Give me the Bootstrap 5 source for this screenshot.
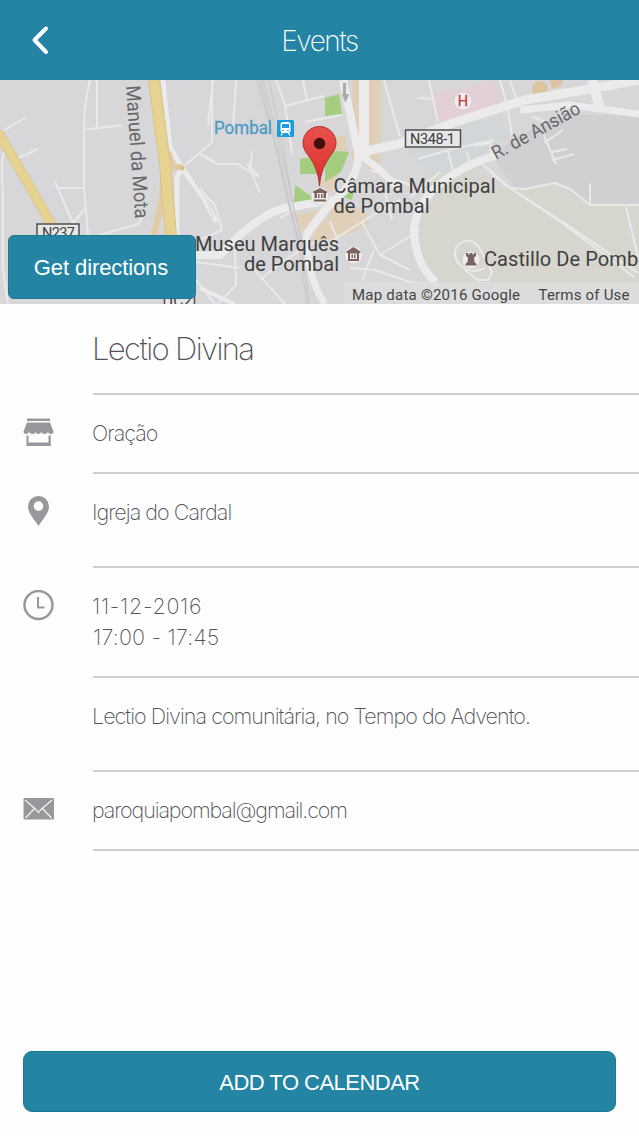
<!DOCTYPE html>
<html lang="pt">

<head>
    <meta charset="UTF-8">
    <meta name="viewport" content="width=device-width, initial-scale=1.0">
    <title>Events</title>
    <link href="https://cdn.jsdelivr.net/npm/bootstrap@5.3.0/dist/css/bootstrap.min.css" rel="stylesheet">
    <style>
        body {
            font-family: Inter, "Liberation Sans", sans-serif;
            font-weight: 200;
            color: #545358;
            background-color: #fefefe;
        }

        .top-bar {
            height: 80px;
            background-color: #2384a4;
            color: #ffffff;
            padding: 3px 23px 0;
        }

        .side-slot {
            width: 34px;
        }

        .top-title {
            font-size: 28px;
            font-weight: 200;
            letter-spacing: -1.45px;
        }

        .map-area {
            height: 224px;
        }

        .map-area text {
            font-family: Roboto, sans-serif;
            font-weight: 400;
        }

        .btn-teal {
            --bs-btn-color: #ffffff;
            --bs-btn-bg: #2384a4;
            --bs-btn-border-color: #1c7893;
            --bs-btn-hover-color: #ffffff;
            --bs-btn-hover-bg: #1c7893;
            font-family: "Liberation Sans", sans-serif;
            font-size: 22px;
            line-height: 1;
        }

        .btn-directions {
            left: 8px;
            bottom: 5px;
            width: 188px;
            height: 64px;
            padding: 8px 12px 6px 10px;
            letter-spacing: -0.1px;
        }

        .btn-calendar {
            height: 61px;
            border-radius: 9px;
            padding-top: 8px;
            letter-spacing: -0.52px;
        }

        .icon-col {
            width: 93px;
            padding: 22px 0 0 23px;
        }

        .detail-body {
            border-bottom: 2px solid #cfcfd1;
            padding-top: 23px;
            font-size: 21.5px;
            line-height: 31px;
            letter-spacing: -0.96px;
            text-indent: -1px;
        }

        .row-title { height: 91px; }
        .row-short { height: 79px; }
        .row-mid { height: 94px; }
        .row-tall { height: 110px; }

        .row-title .detail-body {
            padding-top: 25px;
            font-size: 31px;
            line-height: 40px;
            letter-spacing: -1.62px;
        }

        .date-text {
            letter-spacing: 0.7px;
        }

        .time-text {
            letter-spacing: 0.2px;
        }

        .mail-text {
            letter-spacing: -1.12px;
        }

        .bottom-bar {
            padding: 0 23px 24px;
        }
    </style>
</head>

<body>
    <div class="d-flex flex-column vh-100 overflow-hidden">
        <!-- Header -->
        <header class="top-bar d-flex align-items-center justify-content-between flex-shrink-0">
            <a href="#" class="side-slot d-flex" aria-label="Back">
                <svg width="34" height="34" viewBox="0 0 34 34" fill="none" stroke="#fff" stroke-width="4" stroke-linecap="round" stroke-linejoin="round">
                    <path d="M23 3.500L11.500 15L23 27" />
                </svg>
            </a>
            <h1 class="top-title m-0">Events</h1>
            <span class="side-slot"></span>
        </header>

        <!-- Map -->
        <section class="map-area position-relative flex-shrink-0">
            <svg class="d-block" width="639" height="224" viewBox="0 0 639 224">
                <rect width="639" height="224" fill="#d7d6d8" />
                <!-- areas -->
                <path d="M436 85Q425 98 430 118Q416 138 417 160Q420 190 442 208L639 208V125H590L555 103L520 110L490 98L474 86Z" fill="#d6d6cf" />
                <path d="M492 76L520 55L560 34L639 36V125H590L555 103L516 109Z" fill="#d0cfd2" />
                <path d="M433 14L482 3L495 0L501 22L480 34L438 42Z" fill="#e3d0d6" />
                <path d="M410 55L500 38L508 55L485 72L435 96L410 75Z" fill="#d1d6d8" />
                <path d="M352 0H381V70L378 98L362 80H352ZM336 57L346 55L348 72L335 70ZM322 100L338 94L330 112L320 110ZM294 135L318 130L310 152L306 160ZM338 123L366 132L368 145L340 158L308 163L318 148Z" fill="#e1d0b9" />
                <path d="M325 18L339 14L342 34L325 36ZM300 79L320 76L322 94L300 94ZM325 70L349 72L341 92L325 102ZM295 105L312 117L310 124L294 124ZM343 117L354 110L352 120Z" fill="#a5cd7f" />
                <circle cx="540" cy="9" r="8" fill="#dbc59d" />
                <path d="M550 0H563L561 6L552 9Z" fill="#e0c3a4" />
                <!-- minor roads -->
                <g fill="none" stroke="#e9e9ea" stroke-width="2" stroke-linejoin="round">
                    <path d="M90 0Q84 25 84 50L84 108L88 155M97 0V48M84 50L122 45M3 51L26 37M18 78L38 69M55 102L73 143L84 130M58 108H84M100 155L138 144L142 138" />
                    <path d="M5 68Q0 85 3 110V190L8 224M212 0V62L182 88M200 74L215 82" />
                    <path d="M200 74L216 84L238 84L250 92L252 71M250 92L258 96L248 84L260 113M213 0L208 45M236 0L233 48M276 0L285 25L292 74M285 26L324 16M303 0L307 20M305 42L342 35M200 110L215 125L222 150L200 160" />
                    <path d="M196 182L240 188M235 170L236 205L218 224M196 200L215 224M250 185L285 224M260 200L285 180L315 162M280 138L306 124" />
                    <path d="M384 0L400 57M330 162L378 132L400 120M330 142L338 160M362 142L380 175L420 150M374 170L362 200M350 188L375 190L410 202L440 205M380 175L410 190M385 112L392 140M370 90L410 105" />
                    <path d="M429 0L438 42M417 18L431 19M500 0L507 25L512 55M418 79L448 70L494 60M448 71L454 95M467 72L471 85L484 78M475 66L490 63L492 75M544 55L556 84M544 63L563 50M552 72Q562 70 567 69M552 80L574 74M532 36L545 42M510 0L518 25M590 103V125M626 127L638 177M440 92L410 118" />
                    <path d="M480 82L505 105L560 140L638 193M487 88L510 108L565 145L634 197M510 108L525 109L555 103L570 109L590 125H639" />
                    <path d="M485 188Q472 196 458 183Q452 172 458 165Q470 156 478 166Q485 178 492 192L488 200L478 200L465 190" />
                </g>
                <!-- wide roads -->
                <g fill="none" stroke="#ebebeb">
                    <path d="M343 0L358 72Q360 90 345 110L325 130L306 155" stroke-width="8" />
                    <path d="M364 0V78" stroke-width="10" />
                    <path d="M358 73L398 64L450 44L490 31L525 20L590 9L639 0" stroke-width="9" />
                    <path d="M358 73L380 90L398 108" stroke-width="7" />
                    <path d="M520 30L570 25L639 34" stroke-width="7" />
                    <path d="M592 0L600 28" stroke-width="10" />
                    <path d="M498 75Q460 85 433 110Q415 130 414 150Q415 185 436 202" stroke-width="8" />
                    <path d="M333 120L290 127Q268 130 240 155L220 175H196" stroke-width="8" />
                    <path d="M306 155L309 185Q315 210 325 224" stroke-width="7" />
                    <path d="M163 0L170 67L182 88L205 120L216 142M177 155V97L182 88" stroke-width="5" />
                    <path d="M200 108L216 140" stroke-width="3" />
                    <path d="M166 0L173 66L207 121L214 139" stroke="#d5d4d8" stroke-width="1" />
                    <path d="M200 208L234 224" stroke-width="4" />
                </g>
                <!-- railway -->
                <g fill="none" stroke="#c6c6c8" stroke-width="1">
                    <path d="M260 0L278 72L288 118L300 170" stroke="#cfcfd1" stroke-width="3" />
                    <path d="M257 0L276 68L286 112L298 160L307 224M263 0L280 66L290 110L301 160L309 224M269 0L284 72L294 130L304 170" />
                </g>
                <!-- main roads -->
                <g fill="none">
                    <path d="M-2 52L52 145" stroke="#d9c790" stroke-width="10" />
                    <path d="M-2 52L52 145" stroke="#e6d391" stroke-width="8" />
                    <path d="M163 100Q163 125 153 156M168 72L173 87H182" stroke="#e2cba1" stroke-width="6" />
                    <path d="M154 0L165 84L171 156" stroke="#d8c389" stroke-width="12" />
                    <path d="M154 0L165 84L171 156" stroke="#e6d391" stroke-width="10" />
                    <circle cx="182" cy="88" r="2.500" fill="#dcc28e" />
                </g>
                <path d="M343 3H346V14H349L345.500 23L342 14H343Z" fill="#a9aaac" />
                <rect x="344" y="202" width="295" height="22" fill="#dddddd" opacity=".75" />
                <!-- road shields -->
                <g fill="#e6e6e6" stroke="#505052" stroke-width="1.500">
                    <rect x="37" y="144" width="42" height="18" />
                    <rect x="405.500" y="50" width="55" height="17" />
                    <rect x="164.500" y="206" width="30" height="20" />
                </g>
                <g font-size="14.500" fill="#3d3d3f">
                    <text x="42" y="158" textLength="33">N237</text>
                    <text x="410" y="64" textLength="45">N348-1</text>
                    <text x="169" y="226" textLength="23" lengthAdjust="spacingAndGlyphs">IC2</text>
                </g>
                <!-- road names -->
                <g fill="#68686a">
                    <text transform="translate(126 6) rotate(86)" font-size="20" textLength="133" lengthAdjust="spacingAndGlyphs">Manuel da Mota</text>
                    <text transform="translate(496 80) rotate(-29)" font-size="19" textLength="98" lengthAdjust="spacingAndGlyphs">R. de Ansião</text>
                </g>
                <!-- station -->
                <text x="214" y="54" font-size="18" fill="#4a9bc6" stroke="#4a9bc6" stroke-width=".3" textLength="58" lengthAdjust="spacingAndGlyphs">Pombal</text>
                <rect x="277" y="40" width="17" height="17" rx="1.500" fill="#199ddb" />
                <rect x="280.500" y="42" width="10" height="11" rx="2.500" fill="#fff" />
                <path d="M282 44H289V48H282Z" fill="#199ddb" />
                <path d="M283 52.500L281 55.500M288 52.500L290 55.500" stroke="#fff" stroke-width="1.200" />
                <circle cx="283" cy="50.500" r=".8" fill="#199ddb" />
                <circle cx="288" cy="50.500" r=".8" fill="#199ddb" />
                <!-- poi badges -->
                <g fill="#f0eeec" stroke="#cccac8" stroke-width=".7">
                    <circle cx="463" cy="21" r="9" />
                    <circle cx="320" cy="116" r="9" />
                    <circle cx="353.500" cy="175" r="9" />
                    <circle cx="471" cy="180" r="9" />
                </g>
                <text x="457.800" y="26" font-size="14.500" fill="#c9403f" stroke="#c9403f" stroke-width=".3">H</text>
                <g fill="#7b6460">
                    <path d="M313 113V111.500L320 108L327 111.500V113ZM314 119.500H326V121.500H314ZM314.500 113H317V118H314.500ZM318 114H319.500V118H318ZM321 114H322.500V118H321ZM323.500 113H326V118H323.500Z" />
                    <path d="M346.500 171.500L353.500 167L360.500 171.500V173H359V181H348V173H346.500ZM350 173.500V179H357V173.500Z" fill-rule="evenodd" />
                    <path d="M351.500 174.500H353V178H351.500ZM354 174.500H355.500V178H354Z" />
                    <path d="M466 173H468V174.500H469.500V173H472.500V174.500H474V173H476V176L474 177.500L474.500 182L476.500 184V185.500H465.500V184L467.500 182L468 177.500L466 176Z" />
                </g>
                <!-- place names -->
                <g font-size="20" fill="#3f3f41">
                    <text x="333.500" y="113" textLength="162">Câmara Municipal</text>
                    <text x="333.500" y="133" textLength="96">de Pombal</text>
                    <text x="195" y="171" textLength="144">Museu Marquês</text>
                    <text x="244" y="191" textLength="95">de Pombal</text>
                    <text x="484" y="186" textLength="170">Castillo De Pombal</text>
                </g>
                <!-- marker -->
                <defs>
                    <linearGradient id="pinFill" x1="0" y1="0" x2="0" y2="1">
                        <stop offset="0" stop-color="#e9514d" />
                        <stop offset="1" stop-color="#d9302c" />
                    </linearGradient>
                </defs>
                <path d="M319.500 106C318.500 92 314 83 308 75C304.500 70.500 303 67 303 63A16.500 16.500 0 0 1 336 63C336 67 334.500 70.500 331 75C325 83 320.500 92 319.500 106Z" fill="url(#pinFill)" stroke="#a9332f" stroke-width="1" />
                <circle cx="319.500" cy="63.500" r="5.700" fill="#40100e" />
                <g font-size="15" fill="#444446">
                    <text x="352" y="219.500" textLength="168">Map data ©2016 Google</text>
                    <text x="538.500" y="219.500" textLength="91">Terms of Use</text>
                </g>
            </svg>
            <button type="button" class="btn btn-teal btn-directions position-absolute">Get directions</button>
        </section>

        <!-- Event details -->
        <main class="flex-grow-1">
            <div class="row-title d-flex">
                <div class="icon-col"></div>
                <div class="detail-body flex-grow-1">Lectio Divina</div>
            </div>
            <div class="row-short d-flex">
                <div class="icon-col">
                    <svg class="d-block" width="31" height="31" viewBox="0 0 31 31" fill="#97989b">
                        <path d="M4 1.500H27V4H4ZM4 5.500H27L30.500 14.500Q30.500 17 28 17Q25.500 17 25 15Q24 17 21.500 17Q19 17 18.500 15Q17.500 17 15.500 17Q13 17 12.500 15Q12 17 9.500 17Q7 17 6 15Q5.500 17 3 17Q0.500 17 .5 14.500Z" />
                        <path d="M3.500 18.500H5.500V25.500H25.500V18.500H27.800V29H3.500Z" />
                    </svg>
                </div>
                <div class="detail-body flex-grow-1">Oração</div>
            </div>
            <div class="row-mid d-flex">
                <div class="icon-col">
                    <svg class="d-block" width="31" height="31" viewBox="0 0 31 31">
                        <path d="M15.500 30C11 23 5 17 5 10.500A10.500 10.500 0 0 1 26 10.500C26 17 20 23 15.500 30ZM15.500 5.300A4.800 4.800 0 1 0 15.500 14.900A4.800 4.800 0 1 0 15.500 5.300Z" fill="#97989b" fill-rule="evenodd" />
                    </svg>
                </div>
                <div class="detail-body flex-grow-1">Igreja do Cardal</div>
            </div>
            <div class="row-tall d-flex">
                <div class="icon-col">
                    <svg class="d-block" width="31" height="31" viewBox="0 0 31 31" fill="none" stroke="#97989b">
                        <circle cx="15.500" cy="15" r="14" stroke-width="2.500" />
                        <path d="M15 7V17.500H21.500" stroke-width="2" />
                    </svg>
                </div>
                <div class="detail-body flex-grow-1"><span class="date-text">11-12-2016</span><br><span class="time-text">17:00 - 17:45</span></div>
            </div>
            <div class="row-mid d-flex">
                <div class="icon-col"></div>
                <div class="detail-body flex-grow-1">Lectio Divina comunitária, no Tempo do Advento.</div>
            </div>
            <div class="row-short d-flex">
                <div class="icon-col">
                    <svg class="d-block" width="31" height="31" viewBox="0 0 31 31">
                        <rect x=".5" y="4" width="30.500" height="21.500" rx="1" fill="#97989b" />
                        <path d="M2 6L13.500 16L15.500 18.500L17.500 16L29 6M2.500 24L11.500 14.500M28.500 24L19.500 14.500" fill="none" stroke="#f4f4f4" stroke-width="1.200" />
                    </svg>
                </div>
                <div class="detail-body mail-text flex-grow-1">paroquiapombal@gmail.com</div>
            </div>
        </main>

        <!-- Action -->
        <footer class="bottom-bar flex-shrink-0">
            <button type="button" class="btn btn-teal btn-calendar w-100">ADD TO CALENDAR</button>
        </footer>
    </div>

    <script src="https://cdn.jsdelivr.net/npm/bootstrap@5.3.0/dist/js/bootstrap.bundle.min.js"></script>
</body>

</html>
